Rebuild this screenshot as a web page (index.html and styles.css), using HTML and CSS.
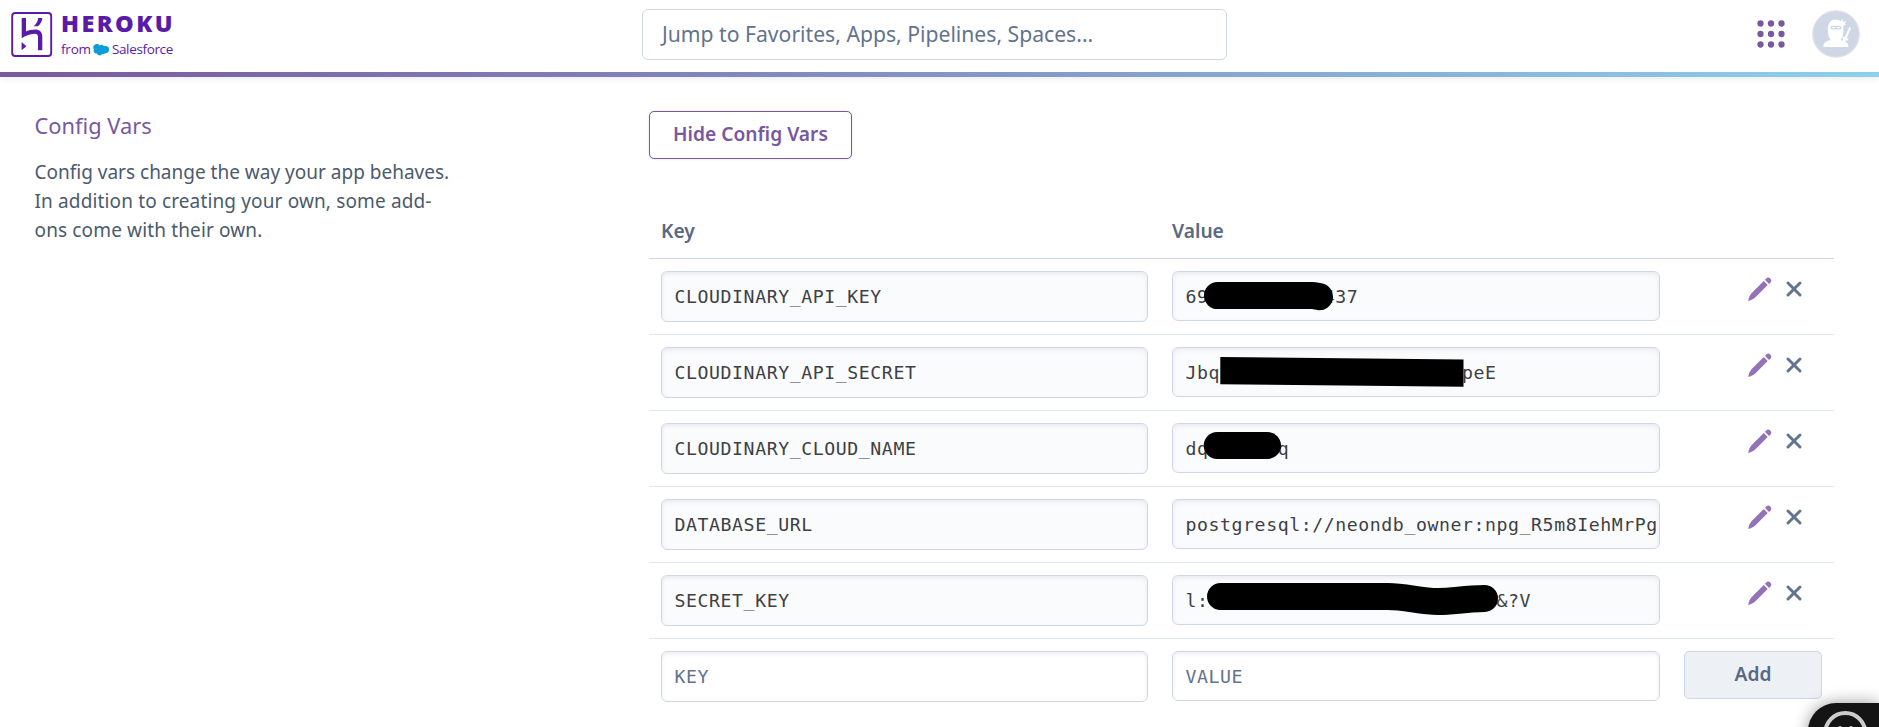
FILE: index.html
```html
<!DOCTYPE html>
<html lang="en">
<head>
<meta charset="utf-8">
<title>Config Vars | Heroku</title>
<link rel="stylesheet" href="styles.css">
</head>
<body>
<svg class="sprite" aria-hidden="true">
  <symbol id="pencil" viewBox="0 0 24 24"><path d="M.3 23.9C.7 20.500 2 17.700 4 15.700L15.700 4 19.700 8 8 19.700C6 21.800 3.500 23.100.3 23.900ZM17 2.700 18.400 1.300C19.500.2 21.100.4 22.300 1.600 23.500 2.800 23.700 4.300 22.600 5.400L21 7Z"/></symbol>
  <symbol id="cross" viewBox="0 0 16 16"><path d="M2 2 14 14M14 2 2 14"/></symbol>
</svg>
<header class="topbar">
  <a class="logo">
    <svg class="logo-mark" viewBox="11 11 42 47">
      <rect x="12.200" y="13" width="39" height="43" rx="3"/>
      <path d="M21.700 18H26V31.500C29 30.300 32 29.600 35 29.600C39.500 29.600 42.300 32 42.300 36.500V50.300H38V37C38 34.500 37 33.800 34.500 33.800C30 33.800 25 36 21.700 38.300ZM38.200 18H42.400C42 21.500 40.500 24 38 26.300H33.800C36.500 23.500 38 21 38.200 18ZM21.600 42 26.400 46.200 21.600 50.300Z"/>
    </svg>
    <span class="logo-words">
      <span class="logo-name">HEROKU</span>
      <span class="logo-by"><span>from</span>
        <svg class="cloud" viewBox="0 0 17 12"><path d="M1 5.500A3.200 3.200 0 0 1 6.700 1.500 3.200 3.200 0 0 1 11 2.200 3.700 3.700 0 1 1 12.300 9.300 3 3 0 0 1 9.300 9.900 3.100 3.100 0 0 1 3.800 9.500 2.700 2.700 0 0 1 1 5.500Z"/></svg>
        <span class="sf">Salesforce</span></span>
    </span>
  </a>
  <div class="search">Jump to Favorites, Apps, Pipelines, Spaces...</div>
  <div class="tools">
    <svg class="dots" viewBox="0 0 28 28"><circle cx="3.500" cy="3.500" r="3.150"/><circle cx="14" cy="3.500" r="3.150"/><circle cx="24.500" cy="3.500" r="3.150"/><circle cx="3.500" cy="14" r="3.150"/><circle cx="14" cy="14" r="3.150"/><circle cx="24.500" cy="14" r="3.150"/><circle cx="3.500" cy="24.500" r="3.150"/><circle cx="14" cy="24.500" r="3.150"/><circle cx="24.500" cy="24.500" r="3.150"/></svg>
    <svg class="avatar" viewBox="0 0 48 48">
      <circle class="disc" cx="24" cy="24" r="23.200"/>
      <path class="ninja" d="M11.500 37C11 33.500 13 31.500 19 30C16.500 28 15.800 24 16 18.500C16.300 12.500 19 9.500 23.500 9.500C26 9.500 27.500 10.300 28.500 11.300L30.500 9 31 12 34.500 10.800 32.500 14 34.500 14.500 31.200 15.500C31.800 21 31.500 26.500 28.500 30L30.500 30.700 31.300 28.800 30 28 31 26.200 32.800 27.200 37.300 17 39.200 18 34.700 28 36.400 29 35.500 30.800 34 30.200 33.500 31.700C35.800 32.800 36.500 34.500 36.300 37Z"/>
      <rect class="mask" x="18.500" y="15.800" width="11" height="3.800" rx="1.900"/>
      <path class="ninja" d="M20.500 17H23.200V18.300H20.500ZM25 17H27.700V18.300H25Z"/>
    </svg>
  </div>
</header>
<main class="page">
  <aside class="intro">
    <h2>Config Vars</h2>
    <p>Config vars change the way your app behaves.<br><span class="loose">In addition to creating your own, some add-<br>ons come with their own.</span></p>
  </aside>
  <section class="vars">
    <button class="hide-btn">Hide Config Vars</button>
    <div class="row head"><span>Key</span><span>Value</span></div>
    <div class="row">
      <div class="field">CLOUDINARY_API_KEY</div>
      <div class="field value">69          437<svg class="ink" viewBox="0 0 488 50"><path d="M45.500 24.600H140C143 24.600 145 25.300 147.500 25.700"/></svg></div>
      <div class="actions"><svg class="edit"><use href="#pencil"/></svg><svg class="remove"><use href="#cross"/></svg></div>
    </div>
    <div class="row">
      <div class="field">CLOUDINARY_API_SECRET</div>
      <div class="field value">Jbq                     peE<svg class="ink" viewBox="0 0 488 50"><path class="flat" d="M48.300 10 291.500 12.500V39.700L48.300 37.200Z"/></svg></div>
      <div class="actions"><svg class="edit"><use href="#pencil"/></svg><svg class="remove"><use href="#cross"/></svg></div>
    </div>
    <div class="row">
      <div class="field">CLOUDINARY_CLOUD_NAME</div>
      <div class="field value">dq      q<svg class="ink" viewBox="0 0 488 50"><path d="M45.200 22.500H95.500"/></svg></div>
      <div class="actions"><svg class="edit"><use href="#pencil"/></svg><svg class="remove"><use href="#cross"/></svg></div>
    </div>
    <div class="row">
      <div class="field">DATABASE_URL</div>
      <div class="field value">postgresql://neondb_owner:npg_R5m8IehMrPg</div>
      <div class="actions"><svg class="edit"><use href="#pencil"/></svg><svg class="remove"><use href="#cross"/></svg></div>
    </div>
    <div class="row">
      <div class="field">SECRET_KEY</div>
      <div class="field value">l:(                        &amp;?V<svg class="ink" viewBox="0 0 488 50"><path d="M48.500 21.500H216C234 21.500 248 26.500 266 26.500C282 26.500 290 24 312.500 23.500"/></svg></div>
      <div class="actions"><svg class="edit"><use href="#pencil"/></svg><svg class="remove"><use href="#cross"/></svg></div>
    </div>
    <div class="row">
      <div class="field empty">KEY</div>
      <div class="field value empty">VALUE</div>
      <button class="add-btn">Add</button>
    </div>
  </section>
</main>
<div class="chat">
  <svg viewBox="0 0 71 56"><circle cx="37.300" cy="30" r="20"/><circle class="eye" cx="32" cy="25" r="2"/><circle class="eye" cx="43" cy="25" r="2"/></svg>
</div>
</body>
</html>
```
FILE: styles.css
```css
* { box-sizing: border-box; }
body {
  margin: 0;
  height: 727px;
  overflow: hidden;
  background: #fff;
  font-family: "Noto Sans", "Open Sans", sans-serif;
  color: #4b5a6e;
}
.sprite { display: none; }

.topbar {
  display: grid;
  grid-template-columns: 642px 585px 1fr;
  height: 77px;
  padding-top: 9px;
  align-items: start;
  border-bottom: 5px solid;
  border-image: linear-gradient(90deg, #79589f, #8dd0ea) 1;
  box-shadow: 0 2px 6px rgba(0, 0, 0, .08);
}
.logo { display: flex; gap: 8px; padding: 2px 0 0 11px; color: #5a1ba9; }
.logo-mark { width: 42px; height: 47px; fill: currentColor; }
.logo-mark rect { fill: none; stroke: currentColor; stroke-width: 1.900; }
.logo-words { display: flex; flex-direction: column; }
.logo-name {
  font: 800 23.500px/24px "Open Sans", sans-serif;
  letter-spacing: 2.400px;
}
.logo-by { display: flex; align-items: center; height: 18px; margin-top: 5px; font: 13.500px/18px "Open Sans", sans-serif; letter-spacing: -.2px; }
.cloud { width: 17px; height: 12px; margin: 1px 2px 0 2px; fill: #0d9dda; }
.sf { letter-spacing: -.35px; }
.search {
  height: 51px;
  padding-left: 19px;
  border: 1px solid #cfd7e6;
  border-radius: 6px;
  font-size: 21.150px;
  line-height: 47px;
  color: #62738d;
  white-space: nowrap;
}
.tools { display: flex; justify-content: flex-end; align-items: center; gap: 27px; height: 50px; padding-right: 19.500px; }
.dots { width: 28px; height: 28px; fill: #79589f; }
.avatar { width: 48px; height: 48px; }
.disc { fill: #cfd7e6; stroke: #dfe0e3; stroke-width: 1.300; }
.ninja { fill: #fff; }
.mask { fill: #cfd7e6; }

.page { display: grid; grid-template-columns: 614px 1185px; padding: 34px 0 0 35px; }
.intro { margin-left: -.5px; }
.intro h2 { margin: 0; font-size: 21.850px; font-weight: 400; line-height: 30px; color: #79589f; }
.intro p { margin: 17px 0 0; font-size: 19px; line-height: 29px; white-space: nowrap; }
.loose { letter-spacing: .14px; }

.hide-btn, .add-btn {
  display: block;
  padding: 0 0 3px;
  font: 600 19.200px "Noto Sans", sans-serif;
  height: 48px;
  border-radius: 5px;
}
.hide-btn {
  width: 203px;
  background: #fff;
  border: 1px solid #79589f;
  color: #79589f;
  box-shadow: 0 0 2px rgba(121, 88, 159, .3);
}
.add-btn { background: #edf1f6; border: 1px solid #cfd7e6; color: #596981; }
.row {
  display: grid;
  grid-template-columns: 487px 488px 138px;
  gap: 24px;
  align-items: start;
  height: 76px;
  padding: 12px 12px 0;
  border-bottom: 1px solid #e3e8f0;
}
.row:last-child { border-bottom: 0; }
.row.head {
  height: 55px;
  margin-top: 45px;
  border-bottom-color: #cbd5e4;
  font-size: 19.200px;
  font-weight: 600;
  line-height: 30px;
  color: #596981;
}
.field {
  position: relative;
  height: 51px;
  padding-left: 12.500px;
  overflow: hidden;
  border: 1px solid #cfd7e6;
  border-radius: 6px;
  background: #fafbfd;
  box-shadow: inset 0 2px 4px rgba(100, 115, 150, .12);
  font: 18.200px/50px "DejaVu Sans Mono", monospace;
  letter-spacing: .57px;
  color: #3f3f44;
  white-space: pre;
}
.value { height: 50px; }
.empty { background: #fff; color: #62738d; }
.ink { position: absolute; top: -1px; left: -1px; width: 488px; height: 50px; fill: none; stroke: #000; stroke-width: 27; stroke-linecap: round; }
.flat { fill: #000; stroke: none; }
.actions { display: flex; align-items: center; gap: 14px; padding: 6px 0 0 64px; }
.edit { width: 24px; height: 24px; fill: #9472b8; }
.remove { width: 16px; height: 16px; fill: none; stroke: #62738d; stroke-width: 2.900; stroke-linecap: round; }

.chat {
  position: fixed;
  right: 0;
  bottom: -32px;
  width: 71px;
  height: 56px;
  border-radius: 28px 0 0 28px;
  background: #141414;
  box-shadow: 0 0 16px rgba(0, 0, 0, .4);
}
.chat svg { display: block; width: 71px; height: 56px; fill: none; stroke: #ccc; stroke-width: 4; }
.chat .eye { fill: #ccc; stroke: none; }
```
